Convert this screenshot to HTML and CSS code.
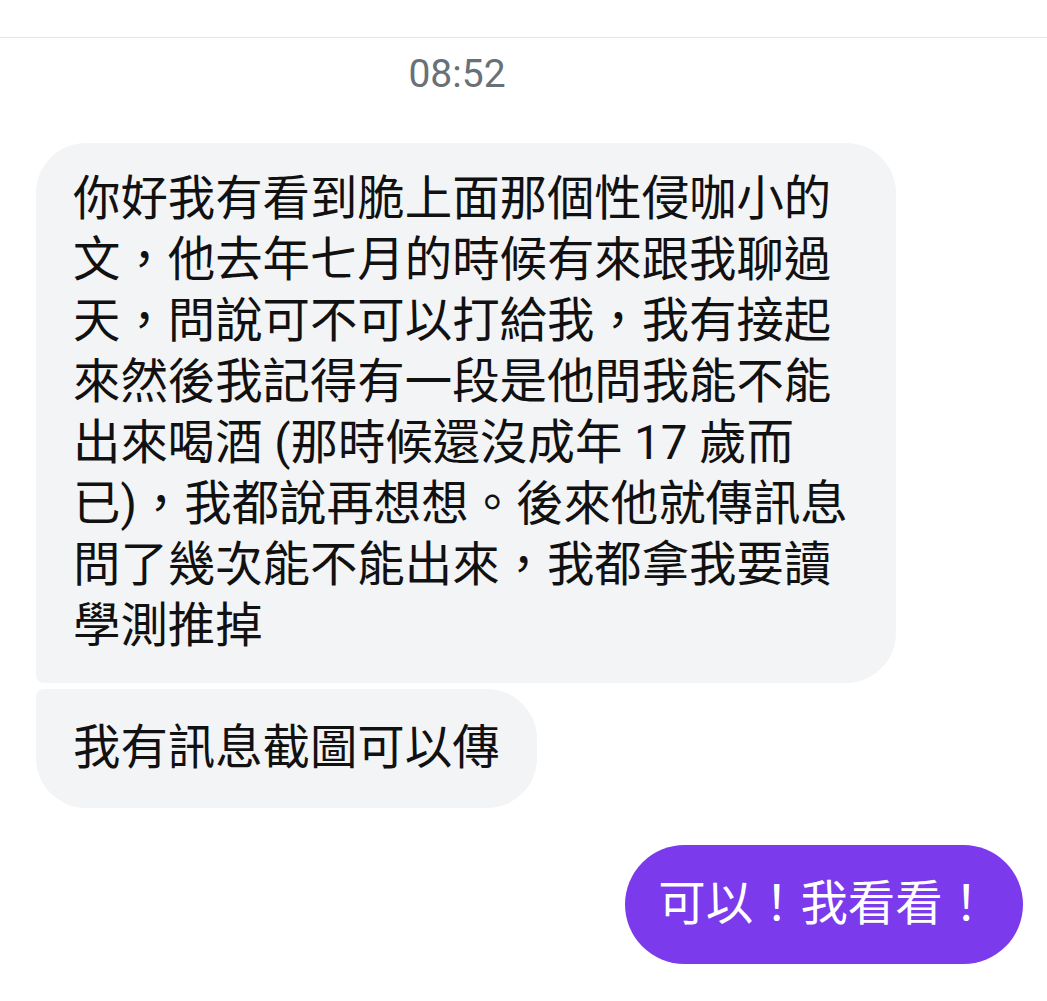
FILE: index.html
```html
<!DOCTYPE html>
<html lang="zh-Hant">
  <head>
    <meta charset="UTF-8" />
    <meta name="viewport" content="width=device-width, initial-scale=1.0" />
    <title>Messages</title>
    <link rel="stylesheet" href="styles.css">
  </head>
  <body>
    <div class="top-bar"></div>

    <div class="timestamp">08:52</div>

    <div class="thread">
      <div class="bubble incoming first long">
        你好我有看到脆上面那個性侵咖小的文，他去年七月的時候有來跟我聊過天，問說可不可以打給我，我有接起來然後我記得有一段是他問我能不能出來喝酒 (那時候還沒成年 17 歲而已)，我都說再想想。後來他就傳訊息問了幾次能不能出來，我都拿我要讀學測推掉
      </div>
      <div class="bubble incoming last">我有訊息截圖可以傳</div>

      <div class="bubble outgoing">可以！我看看！</div>
    </div>
  </body>
</html>
```

FILE: styles.css
```css
body {
  margin: 0;
  padding: 0;
  background-color: #ffffff;
  font-family: Roboto, "Noto Sans CJK TC", sans-serif;
  color: #111111;
}

.top-bar {
  height: 37px;
  border-bottom: 1px solid #e6e7ea;
}

.timestamp {
  margin-top: 14px;
  padding-right: 133px;
  text-align: center;
  font-size: 39px;
  line-height: 45px;
  color: #687078;
}

.thread {
  display: flex;
  flex-direction: column;
  align-items: flex-start;
  padding: 46px 24px 0 36px;
}

.bubble {
  box-sizing: border-box;
  max-width: 860px;
  padding: 29px 37px;
  font-size: 47.4px;
  line-height: 61px;
  border-radius: 50px;
}

.bubble.long {
  padding: 26px 37px;
}

.incoming {
  background-color: #f3f4f6;
  color: #111111;
}

/* grouped messages: inner corners are tight */
.incoming.first {
  border-bottom-left-radius: 8px;
}

.incoming.last {
  margin-top: 6px;
  border-top-left-radius: 8px;
}

.outgoing {
  align-self: flex-end;
  margin-top: 37px;
  padding: 29px 33px;
  background-color: #7c3aed;
  color: #ffffff;
  border-radius: 60px;
}
```
